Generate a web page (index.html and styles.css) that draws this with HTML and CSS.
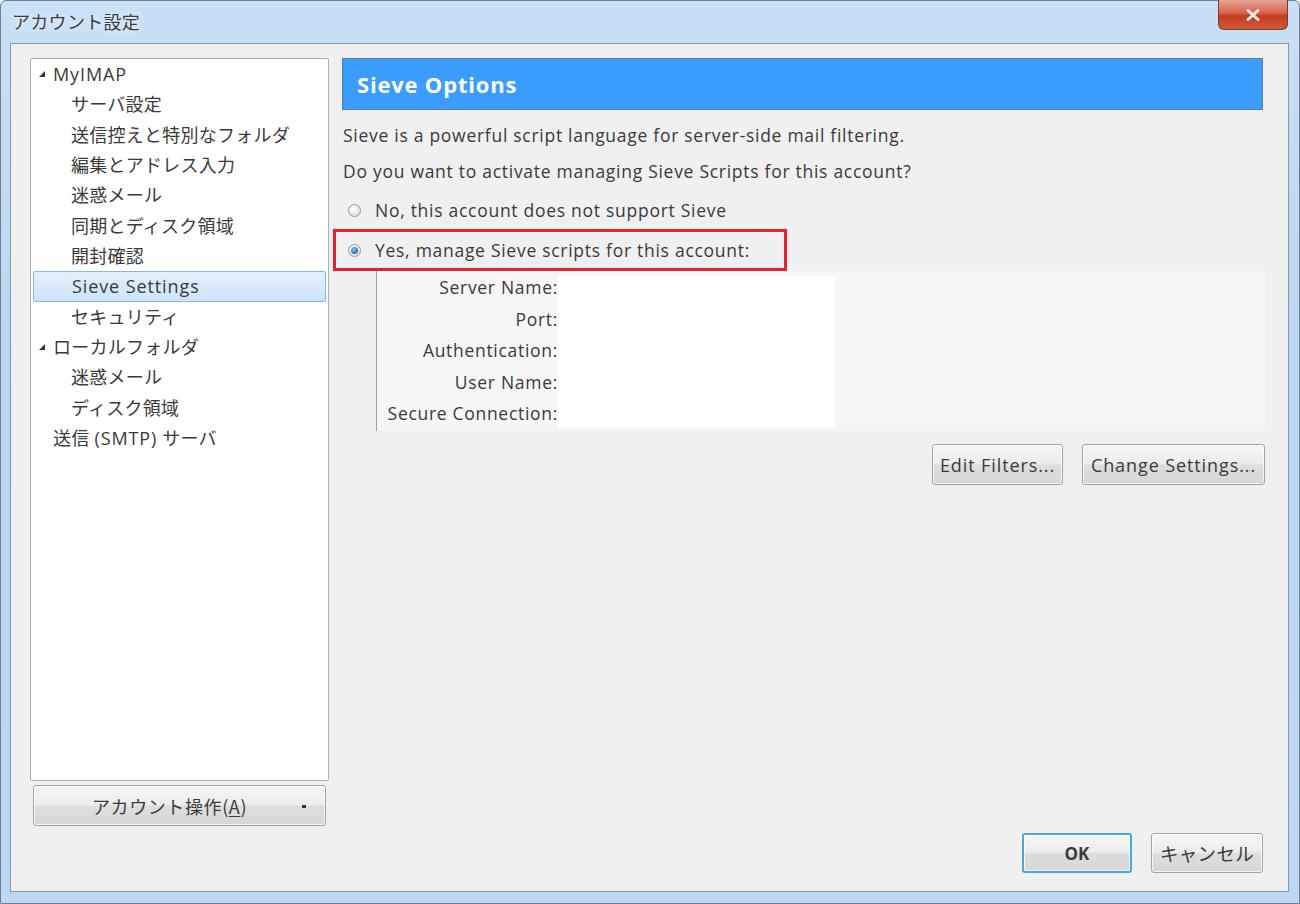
FILE: index.html
```html
<!DOCTYPE html>
<html lang="ja">
<head>
<meta charset="utf-8">
<title>アカウント設定</title>
<link rel="stylesheet" href="styles.css">
</head>
<body>
<div class="window">
  <div class="titlebar">
    <span class="title">アカウント設定</span>
    <div class="close-btn">
      <svg width="18" height="14" viewBox="0 0 18 14"><path d="M4 2.5 L14 11.5 M14 2.5 L4 11.5" stroke="#f4eeee" stroke-width="3" stroke-linecap="round"/></svg>
    </div>
  </div>
  <div class="client">
    <div class="left-col">
      <div class="tree">
        <div class="row top lat"><span class="tri"></span>MyIMAP</div>
        <div class="row child">サーバ設定</div>
        <div class="row child">送信控えと特別なフォルダ</div>
        <div class="row child">編集とアドレス入力</div>
        <div class="row child">迷惑メール</div>
        <div class="row child">同期とディスク領域</div>
        <div class="row child">開封確認</div>
        <div class="row child selected lat">Sieve Settings</div>
        <div class="row child">セキュリティ</div>
        <div class="row top"><span class="tri"></span>ローカルフォルダ</div>
        <div class="row child">迷惑メール</div>
        <div class="row child">ディスク領域</div>
        <div class="row top">送信 <span class="lat">(SMTP)</span> サーバ</div>
      </div>
      <div class="btn account-btn"><span>アカウント操作(<u>A</u>)</span><span class="dot"></span></div>
    </div>
    <div class="right-col">
      <div class="header">Sieve Options</div>
      <p class="text first">Sieve is a powerful script language for server-side mail filtering.</p>
      <p class="text">Do you want to activate managing Sieve Scripts for this account?</p>
      <div class="radio-row"><span class="radio"></span>No, this account does not support Sieve</div>
      <div class="radio-row highlight"><span class="radio checked"></span>Yes, manage Sieve scripts for this account:</div>
      <div class="settings">
        <div class="fields">
          <div class="lbl">Server Name:</div>
          <div class="lbl">Port:</div>
          <div class="lbl">Authentication:</div>
          <div class="lbl">User Name:</div>
          <div class="lbl">Secure Connection:</div>
          <div class="values"></div>
        </div>
      </div>
      <div class="action-row">
        <div class="btn edit-btn">Edit Filters...</div>
        <div class="btn change-btn">Change Settings...</div>
      </div>
      <div class="footer">
        <div class="btn ok-btn">OK</div>
        <div class="btn cancel-btn">キャンセル</div>
      </div>
    </div>
  </div>
</div>
</body>
</html>
```
FILE: styles.css
```css
html, body {
  margin: 0;
  padding: 0;
}
body {
  width: 1300px;
  height: 904px;
  overflow: hidden;
  font-family: "Open Sans", "Noto Sans CJK JP", sans-serif;
  color: #3a3a3a;
}
.window {
  width: 1300px;
  height: 904px;
  box-sizing: border-box;
  display: flex;
  flex-direction: column;
  background: linear-gradient(180deg, #c9e0f6 0%, #b9d6f3 40%, #bcd8f4 100%);
  border: 1px solid #6f7f90;
  border-radius: 6px 6px 0 0;
}
.titlebar {
  height: 42px;
  flex: none;
  display: flex;
  align-items: flex-start;
  position: relative;
}
.title {
  margin: 7px 0 0 11px;
  font-family: "Noto Sans CJK JP", sans-serif;
  font-size: 18px;
  letter-spacing: 0.3px;
  color: #3c3c3c;
  text-shadow: 0 0 8px #e8f2fc, 0 0 4px #e8f2fc;
}
.close-btn {
  position: absolute;
  right: 11px;
  top: -1px;
  width: 70px;
  height: 30px;
  box-sizing: border-box;
  border: 1px solid #7a3a30;
  border-top: none;
  border-radius: 0 0 6px 6px;
  background: linear-gradient(180deg, #e7a594 0%, #d8624b 45%, #c43a20 55%, #d55a36 100%);
  display: flex;
  align-items: center;
  justify-content: center;
}
.client {
  flex: 1;
  margin: 0 10px 11px 9px;
  border: 1px solid #8797a8;
  background: #f0f0f0;
  display: flex;
  padding: 14px 23px 18px 19px;
  gap: 13px;
}
.left-col {
  width: 299px;
  display: flex;
  flex-direction: column;
  gap: 4px;
}
.tree {
  height: 721px;
  background: #fff;
  border: 1px solid #a9b0b8;
  border-radius: 2px;
  padding-top: 0;
  font-size: 18px;
  letter-spacing: 0.25px;
}
.lat {
  letter-spacing: 0.9px;
}
.row {
  height: 30.33px;
  line-height: 30px;
  position: relative;
  white-space: nowrap;
  box-sizing: border-box;
}
.row.top {
  padding-left: 22px;
}
.row.child {
  padding-left: 40px;
}
.tri {
  position: absolute;
  left: 8px;
  top: 12px;
  width: 0;
  height: 0;
  border-left: 6px solid transparent;
  border-bottom: 6px solid #333;
}
.row.selected {
  margin: 0 2px;
  padding-left: 38px;
  background: linear-gradient(180deg, #e4f0fd 0%, #cde3fb 100%);
  border: 1px solid #8fb6e3;
  border-radius: 2px;
  line-height: 28px;
}
.btn {
  box-sizing: border-box;
  border: 1px solid #a3a3a3;
  border-radius: 3px;
  background: linear-gradient(180deg, #f6f6f6 0%, #ececec 48%, #dedede 52%, #d6d6d6 100%);
  display: flex;
  align-items: center;
  justify-content: center;
  font-size: 18px;
  letter-spacing: 0.9px;
  color: #3a3a3a;
  box-shadow: inset 0 0 0 1px rgba(255,255,255,0.7);
}
.account-btn {
  margin: 0 3px;
  height: 41px;
  position: relative;
  font-family: "Noto Sans CJK JP", sans-serif;
  font-size: 18px;
  letter-spacing: 0.6px;
}
.account-btn span:first-child {
  margin-left: -20px;
}
.account-btn u {
  text-underline-offset: 2px;
}
.dot {
  position: absolute;
  right: 19px;
  top: 19px;
  width: 4px;
  height: 3px;
  background: #333;
}
.right-col {
  flex: 1;
  display: flex;
  flex-direction: column;
}
.header {
  height: 52px;
  margin-right: 2px;
  box-sizing: border-box;
  background: #3a9cfc;
  border: 1px solid #5c7fa8;
  color: #fff;
  font-weight: bold;
  font-size: 22px;
  letter-spacing: 0.8px;
  line-height: 50px;
  padding-left: 14px;
}
.text {
  margin: 0;
  font-size: 17.5px;
  letter-spacing: 0.72px;
  line-height: 36px;
  padding-left: 1px;
  white-space: nowrap;
}
.text.first {
  margin-top: 7px;
}
.radio-row {
  display: flex;
  align-items: center;
  height: 38px;
  font-size: 17.5px;
  letter-spacing: 0.72px;
  padding-left: 5px;
  margin-top: 2px;
  white-space: nowrap;
}
.radio-row.highlight {
  margin-left: -9px;
  width: 454px;
  height: 42px;
  box-sizing: border-box;
  border: 3px solid #e5202f;
  padding-left: 11px;
  margin-top: 0;
}
.radio {
  width: 13px;
  height: 13px;
  border-radius: 50%;
  box-sizing: border-box;
  border: 1px solid #9a9a9a;
  background: radial-gradient(circle at 40% 35%, #ffffff 0%, #e6e6e6 60%, #cfcfcf 100%);
  margin-right: 14px;
  margin-left: 1px;
  position: relative;
  flex: none;
}
.radio.checked::after {
  content: "";
  position: absolute;
  left: 2px;
  top: 2px;
  width: 7px;
  height: 7px;
  border-radius: 50%;
  background: radial-gradient(circle at 40% 35%, #7fc3f2 0%, #2a6fa8 70%, #1a4f80 100%);
}
.settings {
  margin-left: 34px;
  height: 160px;
  box-sizing: border-box;
  background: #f6f6f6;
  border-left: 1px solid #a0a0a0;
  padding: 1px 0 0 1px;
}
.fields {
  display: grid;
  grid-template-columns: 180px 277px;
  grid-template-rows: repeat(5, 31.5px);
  font-size: 17.5px;
  letter-spacing: 0.7px;
  position: relative;
}
.lbl {
  grid-column: 1;
  text-align: right;
  line-height: 31.5px;
  white-space: nowrap;
}
.values {
  grid-column: 2;
  grid-row: 1 / 6;
  background: #fff;
  margin: 4px 0 2px 0;
}
.action-row {
  display: flex;
  justify-content: flex-end;
  gap: 19px;
  margin-top: 13px;
}
.edit-btn {
  width: 131px;
  height: 41px;
}
.change-btn {
  width: 183px;
  height: 41px;
}
.footer {
  margin-top: auto;
  display: flex;
  justify-content: flex-end;
  gap: 19px;
  padding-right: 2px;
}
.ok-btn {
  width: 110px;
  height: 40px;
  border: 2px solid #49a9dc;
  font-weight: bold;
  font-size: 17px;
  letter-spacing: 0;
}
.cancel-btn {
  width: 112px;
  height: 40px;
  font-family: "Noto Sans CJK JP", sans-serif;
  font-size: 18.5px;
  letter-spacing: 0.3px;
}
```
